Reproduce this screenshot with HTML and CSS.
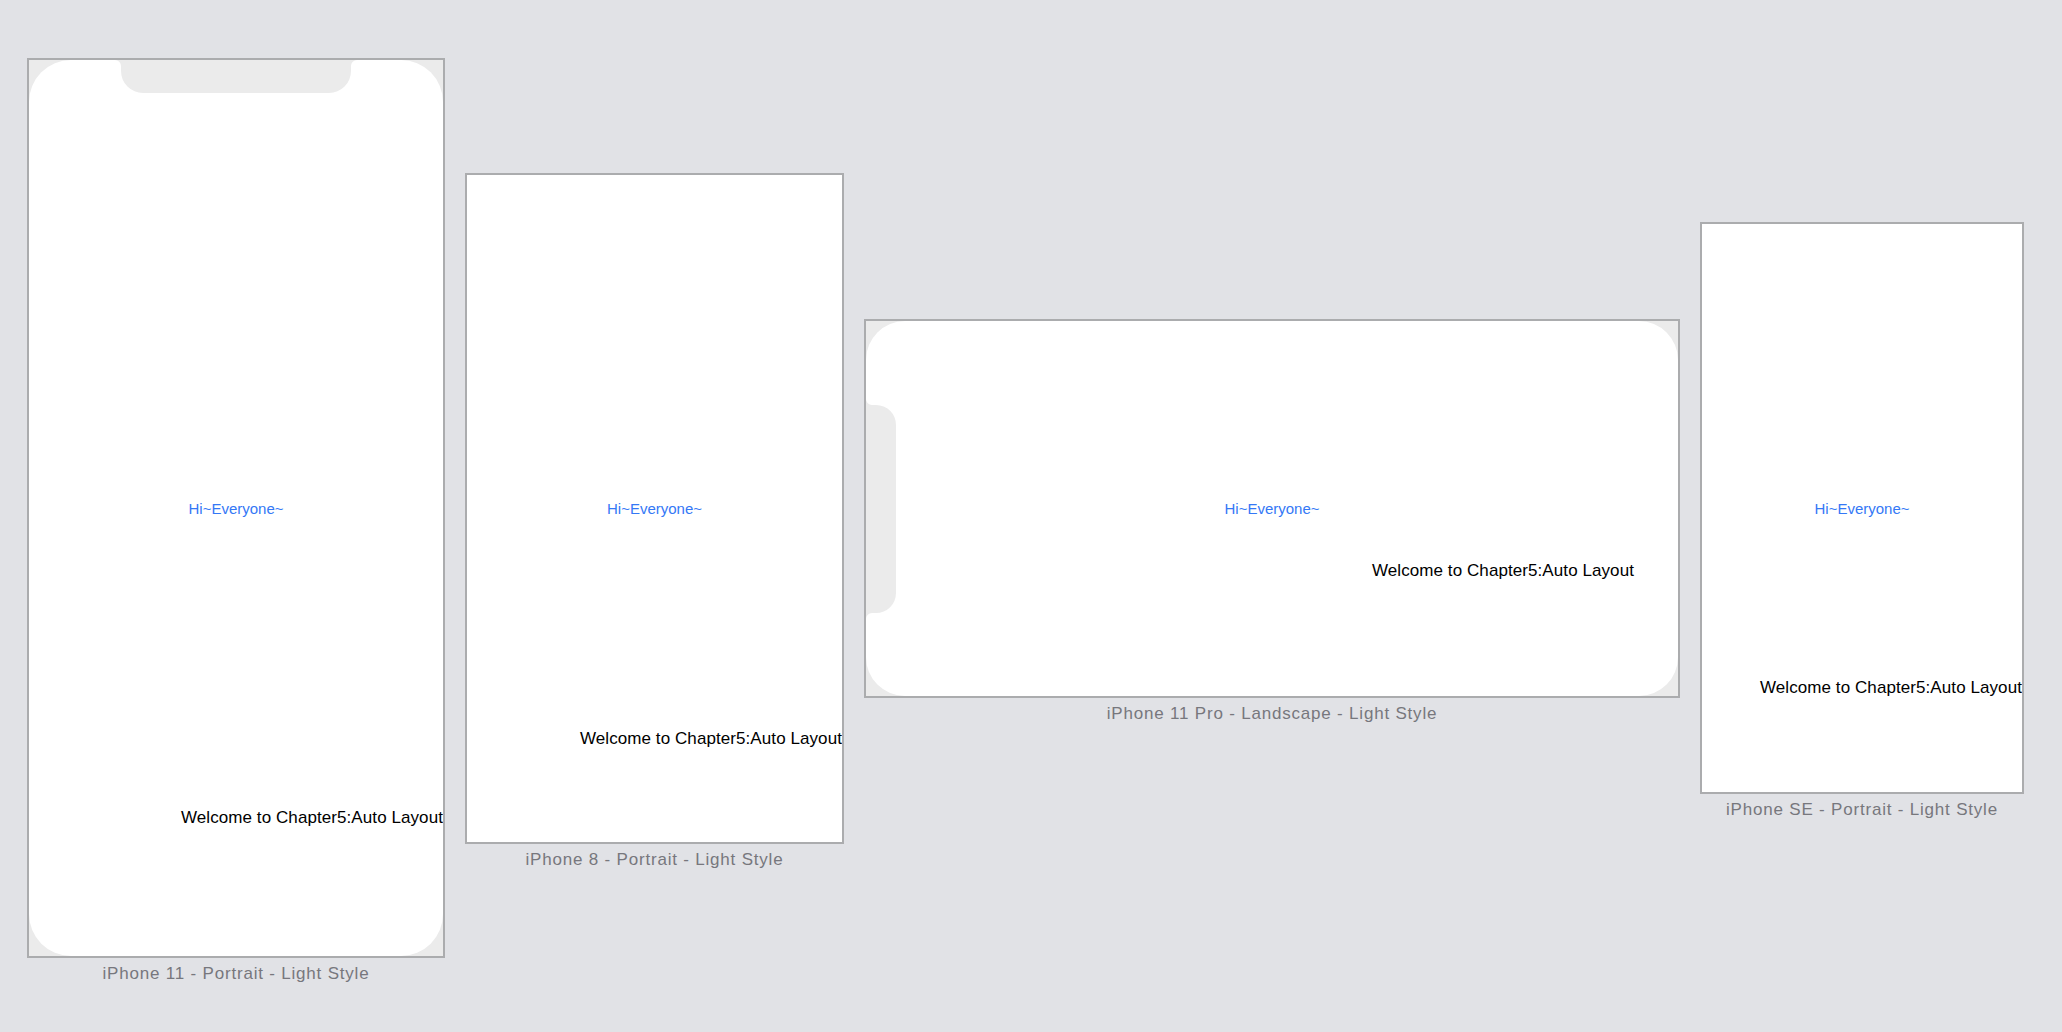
FILE: index.html
```html
<!DOCTYPE html>
<html lang="en">
<head>
<meta charset="utf-8">
<title>Storyboard preview</title>
<link rel="stylesheet" href="styles.css">
</head>
<body>
<div class="canvas">
  <div class="device">
    <div class="frame">
      <div class="screen screen-11">
        <svg class="notch notch-top" width="242" height="33" viewBox="0 0 242 33"><path d="M0 0 H242 A6 6 0 0 0 236 6 V11 A22 22 0 0 1 214 33 H28 A22 22 0 0 1 6 11 V6 A6 6 0 0 0 0 0 Z"/></svg>
        <span class="hi">Hi~Everyone~</span>
        <span class="welcome welcome-11">Welcome to Chapter5:Auto Layout</span>
      </div>
    </div>
    <div class="caption">iPhone 11 - Portrait - Light Style</div>
  </div>
  <div class="device">
    <div class="frame">
      <div class="screen screen-8">
        <span class="hi">Hi~Everyone~</span>
        <span class="welcome welcome-8">Welcome to Chapter5:Auto Layout</span>
      </div>
    </div>
    <div class="caption">iPhone 8 - Portrait - Light Style</div>
  </div>
  <div class="device">
    <div class="frame">
      <div class="screen screen-pro">
        <svg class="notch notch-side" width="30" height="220" viewBox="0 0 30 220"><path d="M0 0 V220 A6 6 0 0 1 6 214 H10 A20 20 0 0 0 30 194 V26 A20 20 0 0 0 10 6 H6 A6 6 0 0 1 0 0 Z"/></svg>
        <span class="hi">Hi~Everyone~</span>
        <span class="welcome welcome-pro">Welcome to Chapter5:Auto Layout</span>
      </div>
    </div>
    <div class="caption">iPhone 11 Pro - Landscape - Light Style</div>
  </div>
  <div class="device">
    <div class="frame">
      <div class="screen screen-se">
        <span class="hi">Hi~Everyone~</span>
        <span class="welcome welcome-se">Welcome to Chapter5:Auto Layout</span>
      </div>
    </div>
    <div class="caption">iPhone SE - Portrait - Light Style</div>
  </div>
</div>
</body>
</html>
```
FILE: styles.css
```css
html, body {
  margin: 0;
  padding: 0;
}
body {
  background: #e1e2e6;
  font-family: "Liberation Sans", Arial, sans-serif;
  width: 2062px;
  height: 1032px;
  overflow: hidden;
}
.canvas {
  display: flex;
  align-items: center;
  gap: 20px;
  height: 900px;
  padding: 58px 0 0 27px;
}
.device {
  display: flex;
  flex-direction: column;
  align-items: center;
}
.frame {
  border: 2px solid #abacae;
  background: #ebebeb;
}
.screen {
  position: relative;
  background: #ffffff;
  display: flex;
  align-items: center;
  justify-content: center;
  overflow: hidden;
}
.screen-11 { width: 414px; height: 896px; border-radius: 42px; }
.screen-8 { width: 375px; height: 667px; }
.screen-pro { width: 812px; height: 375px; border-radius: 39px; }
.screen-se { width: 320px; height: 568px; }

.notch {
  position: absolute;
  fill: #ebebeb;
}
.notch-top { top: 0; left: 86px; }
.notch-side { left: 0; top: 78px; }

.hi {
  font-size: 15px;
  line-height: 20px;
  padding-top: 2px;
  color: #3478f6;
  white-space: nowrap;
}
.welcome {
  position: absolute;
  right: 0;
  font-size: 17px;
  line-height: 20px;
  letter-spacing: 0.08px;
  color: #000000;
  white-space: nowrap;
}
.welcome-11 { top: 748px; }
.welcome-8 { top: 554px; }
.welcome-pro { top: 240px; right: 44px; }
.welcome-se { top: 454px; }

.caption {
  height: 20px;
  line-height: 20px;
  margin-top: 6px;
  margin-bottom: -26px;
  font-size: 17px;
  letter-spacing: 0.8px;
  color: #77777d;
  white-space: nowrap;
}
```
